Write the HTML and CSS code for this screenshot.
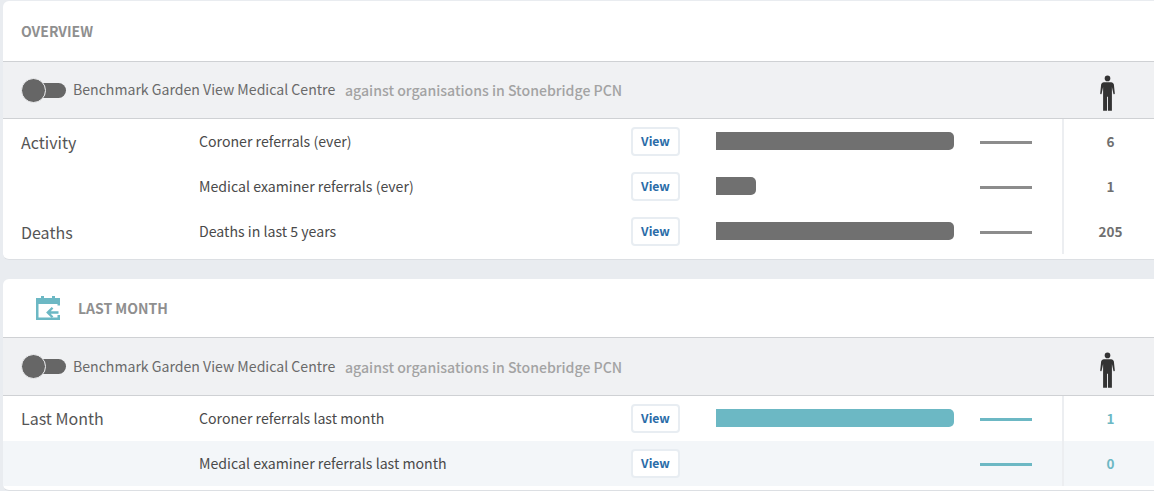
FILE: index.html
```html
<!DOCTYPE html>
<html lang="en">
<head>
<meta charset="utf-8">
<title>Overview</title>
<link rel="stylesheet" href="styles.css">
</head>
<body>
<section class="card">
  <header class="card-head"><h2 class="title">OVERVIEW</h2></header>
  <div class="band">
    <span class="toggle"><span class="knob"></span></span>
    <span class="band-name">Benchmark Garden View Medical Centre</span>
    <span class="band-sub">against organisations in Stonebridge PCN</span>
    <span class="band-icon"><svg class="person" viewBox="0 0 16 38" width="15" height="36"><circle cx="8" cy="3.4" r="3"/><path d="M4.2 7.4h7.6c1.600 0 2.700 1 3 2.600l1 9.600c.1.900-1.300 1.100-1.500.2L12.700 12.500V38H8.500V23h-1v15H3.300V12.500L1.700 19.800c-.2.900-1.600.7-1.500-.2l1-9.600c.3-1.600 1.400-2.600 3-2.600z"/></svg></span>
  </div>
  <div class="rows">
    <div class="row"><div class="group">Activity</div><div class="name">Coroner referrals (ever)</div><a class="view">View</a><div class="track"><div class="bar full"></div></div><div class="line"></div><div class="value">6</div></div>
    <div class="row"><div class="group"></div><div class="name">Medical examiner referrals (ever)</div><a class="view">View</a><div class="track"><div class="bar small"></div></div><div class="line"></div><div class="value">1</div></div>
    <div class="row"><div class="group">Deaths</div><div class="name">Deaths in last 5 years</div><a class="view">View</a><div class="track"><div class="bar full"></div></div><div class="line"></div><div class="value">205</div></div>
  </div>
</section>
<section class="card second">
  <header class="card-head head-icon">
    <svg class="cal" viewBox="0 0 24 24" width="24" height="24"><path d="M5 0h3v2h8V0h3v2h5v7.500h-2.500V8h-19v13.500h19V19h2.500v5H0V2h5z"/><path d="M22.500 15.300h-7.800l2.700-2.700-1.700-1.700-5.600 5.600 5.600 5.600 1.700-1.700-2.700-2.700h7.800z"/></svg>
    <h2 class="title">LAST MONTH</h2>
  </header>
  <div class="band">
    <span class="toggle"><span class="knob"></span></span>
    <span class="band-name">Benchmark Garden View Medical Centre</span>
    <span class="band-sub">against organisations in Stonebridge PCN</span>
    <span class="band-icon"><svg class="person" viewBox="0 0 16 38" width="15" height="36"><circle cx="8" cy="3.4" r="3"/><path d="M4.2 7.4h7.6c1.600 0 2.700 1 3 2.600l1 9.600c.1.900-1.300 1.100-1.500.2L12.700 12.500V38H8.500V23h-1v15H3.300V12.500L1.700 19.800c-.2.900-1.600.7-1.500-.2l1-9.600c.3-1.600 1.400-2.600 3-2.600z"/></svg></span>
  </div>
  <div class="rows">
    <div class="row teal"><div class="group">Last Month</div><div class="name">Coroner referrals last month</div><a class="view">View</a><div class="track"><div class="bar full"></div></div><div class="line"></div><div class="value">1</div></div>
    <div class="row teal shaded"><div class="group"></div><div class="name">Medical examiner referrals last month</div><a class="view">View</a><div class="track"></div><div class="line"></div><div class="value">0</div></div>
  </div>
</section>
</body>
</html>
```
FILE: styles.css
```css
* { box-sizing: border-box; }
html, body { height: 100%; overflow: hidden; }
body {
  margin: 0;
  padding: 1px 0 0 3px;
  background: #e9ecf0;
  font-family: "Noto Sans CJK SC", "Noto Sans", sans-serif;
  color: #4a4a4a;
  font-size: 14.15px;
}
.card {
  background: #fff;
  border-radius: 6px 0 0 6px;
  border-bottom: 1px solid #dcdfe3;
  height: 259px;
  width: 1155px;
}
.second { margin-top: 19px; height: 212px; }
.card-head {
  height: 60px;
  display: flex;
  align-items: center;
  padding-left: 18px;
}
.head-icon { height: 58px; padding-left: 33px; gap: 18px; }
.title {
  margin: 0;
  font-size: 14px;
  font-weight: 700;
  line-height: 20px;
  color: #8f8f8f;
}
.band {
  height: 58px;
  display: flex;
  align-items: center;
  background: #f0f1f3;
  border-top: 1px solid #cfd1d4;
  border-bottom: 1px solid #cfd1d4;
  padding-left: 19px;
}
.second .band { height: 59px; }
.toggle {
  flex: none;
  width: 44px;
  height: 15px;
  border-radius: 8px;
  background: #666;
  position: relative;
  margin-right: 7px;
}
.knob {
  position: absolute;
  left: -1px;
  top: -5px;
  width: 25px;
  height: 25px;
  border-radius: 50%;
  background: #666;
  border: 1px solid #f0f1f3;
}
.band-name { flex: none; color: #6a6a6a; line-height: 20px; width: 272px; white-space: nowrap; font-size: 14.1px; padding-bottom: 2px; height: 22px; }
.band-sub { flex: 1; color: #a3a3a3; font-weight: 500; line-height: 20px; white-space: nowrap; font-size: 14.1px; }
.band-icon { flex: none; display: flex; width: 102px; justify-content: center; padding: 6px 0 0 1px; }
.person { fill: #333; }
.cal { fill: #6cb8c4; }
.row { height: 45px; display: flex; align-items: center; }
.group { width: 196px; padding-left: 18px; font-size: 16px; line-height: 22px; color: #555; flex: none; }
.second .group { padding-bottom: 2px; }
.name { width: 432px; line-height: 20px; color: #4a4a4a; flex: none; padding-bottom: 2px; }
.view {
  width: 49px;
  height: 29px;
  flex: none;
  display: flex;
  align-items: center;
  justify-content: center;
  background: #fff;
  border: 2px solid #e8edf2;
  border-radius: 4px;
  color: #2a6ca8;
  font-size: 12.2px;
  font-weight: 600;
  padding-bottom: 1px;
}
.track { width: 238px; margin-left: 36px; flex: none; margin-top: -2px; }
.bar { height: 18px; background: #707070; border-radius: 0 5px 5px 0; }
.bar.full { width: 238px; }
.bar.small { width: 40px; }
.line { width: 52px; height: 3px; background: #8c8c8c; margin: 1px 0 0 26px; flex: none; }
.value {
  width: 95px;
  margin-left: 30px;
  height: 100%;
  flex: none;
  display: flex;
  align-items: center;
  justify-content: center;
  border-left: 2px solid #eceef1;
  font-weight: 600;
  font-size: 13.5px;
  color: #6f6f6f;
  padding-bottom: 2px;
}
.teal .bar { background: #6cb8c4; }
.teal .line { background: #6cb8c4; }
.teal .value { color: #6cb8c4; }
.shaded { background: #f3f6f9; }
```
